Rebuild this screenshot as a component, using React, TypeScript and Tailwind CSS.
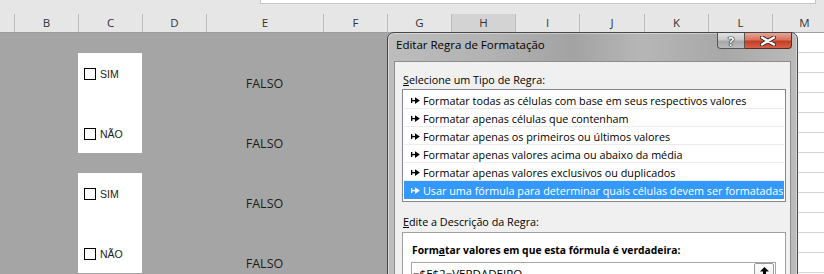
import React from 'react';

const cols = [
  { k: '', w: 'w-[14px]' },
  { k: 'B', w: 'w-[64px]' },
  { k: 'C', w: 'w-[64px]' },
  { k: 'D', w: 'w-[64px]' },
  { k: 'E', w: 'w-[117px]' },
  { k: 'F', w: 'w-[64px]' },
  { k: 'G', w: 'w-[64px]' },
  { k: 'H', w: 'w-[64px]' },
  { k: 'I', w: 'w-[64px]' },
  { k: 'J', w: 'w-[65px]' },
  { k: 'K', w: 'w-[64px]' },
  { k: 'L', w: 'w-[64px]' },
  { k: 'M', w: 'w-[64px]' },
];

const rules = [
  'Formatar todas as células com base em seus respectivos valores',
  'Formatar apenas células que contenham',
  'Formatar apenas os primeiros ou últimos valores',
  'Formatar apenas valores acima ou abaixo da média',
  'Formatar apenas valores exclusivos ou duplicados',
  'Usar uma fórmula para determinar quais células devem ser formatadas',
];

function Bullet() {
  return (
    <svg width="9" height="7" viewBox="0 0 9 7" className="shrink-0">
      <rect x="0" y="1" width="1.3" height="5" fill="currentColor" />
      <rect x="1" y="2.9" width="4" height="1.4" fill="currentColor" />
      <path d="M4 0.3 L8.8 3.6 L4 6.9 Z" fill="currentColor" />
    </svg>
  );
}

function Check({ label }: { label: string }) {
  return (
    <div className="flex items-center h-[12px]">
      <div className="w-[12px] h-[12px] border border-black bg-white shrink-0" />
      <span className="ml-[4px] text-[10.5px] leading-[12px] text-[#222] font-['Liberation_Sans',sans-serif]">{label}</span>
    </div>
  );
}

function Falso() {
  return (
    <div className="flex items-center justify-center pt-[2px] text-[12.5px] text-[#1e1e1e] font-['Open_Sans',sans-serif]">FALSO</div>
  );
}

export default function App() {
  return (
    <div className="relative w-[824px] h-[274px] overflow-hidden bg-[#e6e6e6] font-['Open_Sans',sans-serif]">
      {/* formula bar remnant */}
      <div className="h-[14px] pl-[260px]">
        <div className="h-[4px] w-[556px] bg-white border border-t-0 border-[#c6c6c6]" />
      </div>
      {/* column headers */}
      <div className="flex h-[19px] border-b border-[#9e9e9e]">
        {cols.map((c) => (
          <div
            key={c.k || 'A'}
            className={`${c.w} shrink-0 flex items-center justify-center text-[11.5px] text-[#333] ${c.k ? 'border-l border-[#bdbdbd]' : ''} ${c.k === 'H' ? 'bg-[#d3d3d3]' : ''}`}
          >
            {c.k}
          </div>
        ))}
      </div>
      {/* sheet body */}
      <div className="grid grid-cols-[14px_64px_64px_64px_117px_64px_64px_64px_64px_65px_64px_64px_64px] grid-rows-[repeat(13,20px)] bg-[#a5a5a5]">
        <div className="col-start-3 row-start-2 row-span-5 bg-white flex flex-col pl-[6px] pt-[15px] gap-[48px]">
          <Check label="SIM" />
          <Check label="NÃO" />
        </div>
        <div className="col-start-3 row-start-8 row-span-5 bg-white flex flex-col pl-[6px] pt-[15px] gap-[48px]">
          <Check label="SIM" />
          <Check label="NÃO" />
        </div>
        <div className="col-start-5 row-start-3 flex"><div className="flex-1 flex items-center justify-center"><Falso /></div></div>
        <div className="col-start-5 row-start-6 flex"><div className="flex-1 flex items-center justify-center"><Falso /></div></div>
        <div className="col-start-5 row-start-9 flex"><div className="flex-1 flex items-center justify-center"><Falso /></div></div>
        <div className="col-start-5 row-start-12 flex"><div className="flex-1 flex items-center justify-center"><Falso /></div></div>
        <div className="col-start-13 row-start-1 row-span-13 bg-white flex flex-col">
          {Array.from({ length: 13 }).map((_, i) => (
            <div key={i} className="h-[20px] shrink-0 border-b border-[#d4d4d4]" />
          ))}
        </div>
      </div>

      {/* dialog window */}
      <div className="absolute left-[387px] top-[32px] w-[411px] h-[260px] rounded-t-[7px] border border-[#474747] bg-[linear-gradient(90deg,#bdbdbd_0%,#b2b2b2_25%,#a3a3a3_45%,#b6b6b6_62%,#a8a8a8_82%,#bababa_100%)] shadow-[inset_0_0_0_1px_rgba(255,255,255,0.4)] flex flex-col">
        <div className="h-[28px] shrink-0 flex items-start">
          <div className="ml-[8px] mt-[4px] text-[11.5px] leading-[16px] text-black">Editar Regra de Formatação</div>
          <div className="ml-auto mr-[5px] flex">
            <div className="w-[28px] h-[16px] rounded-bl-[4px] border border-t-0 border-[#555] bg-[linear-gradient(#e2e2e2,#c8c8c8_45%,#a8a8a8_55%,#bcbcbc)] flex items-center justify-center">
              <span className="text-[13px] leading-[14px] font-bold text-white [text-shadow:0_0_1px_#000,0_0_1px_#000,0_0_1px_#000]">?</span>
            </div>
            <div className="w-[47px] h-[16px] rounded-br-[4px] border border-t-0 border-l-0 border-[#5b2a22] bg-[linear-gradient(#e9a695,#d7735e_45%,#c43e24_55%,#d5604a)] flex items-center justify-center">
              <svg width="16" height="10" viewBox="0 0 16 10">
                <path d="M2 1.5 L14 8.5 M14 1.5 L2 8.5" stroke="#3a2a28" strokeWidth="4.2" strokeLinecap="round" />
                <path d="M2 1.5 L14 8.5 M14 1.5 L2 8.5" stroke="#fff" strokeWidth="2.4" strokeLinecap="round" />
              </svg>
            </div>
          </div>
        </div>
        <div className="mx-[6px] flex-1 border border-[#8d8d8d] bg-[#f0f0f0] pt-[10px] text-[10.8px] text-black">
          <div className="pl-[8px] leading-[16px]"><u>S</u>elecione um Tipo de Regra:</div>
          <div className="ml-[7px] mt-[1px] w-[384px] border border-[#828790] bg-white pt-[1px] pb-[2px] px-[1px]">
            {rules.map((r, i) => (
              <div
                key={r}
                className={`h-[18px] flex items-center pl-[7px] pt-[2px] border-b ${i === 5 ? 'bg-[#3399ff] text-white border-[#3399ff]' : 'border-[#ececec] text-black'}`}
              >
                <Bullet />
                <span className="ml-[3px] whitespace-nowrap leading-[16px]">{r}</span>
              </div>
            ))}
          </div>
          <div className="pl-[8px] mt-[12px] leading-[16px]"><u>E</u>dite a Descrição da Regra:</div>
          <div className="ml-[7px] mt-[2px] w-[384px] h-[60px] border border-[#a0a0a0] bg-white pl-[8px] pt-[9px]">
            <div className="ml-[1px] font-bold text-[10.3px] leading-[16px]">Form<u>a</u>tar valores em que esta fórmula é verdadeira:</div>
            <div className="mt-[4px] w-[365px] h-[22px] border border-[#a6a6a6] flex items-start">
              <span className="pl-[1px] pt-[3px] leading-[16px] text-[11.5px]">=$E$2=VERDADEIRO</span>
              <div className="ml-auto mr-[1px] w-[20px] h-[19px] rounded-[2px] border border-[#9a9a9a] bg-[linear-gradient(#fdfdfd,#ececec)] flex justify-center pt-[3px]">
                <svg width="9" height="9" viewBox="0 0 9 9">
                  <path d="M4.5 0 L9 4.5 H6 V9 H3 V4.5 H0 Z" fill="#000" />
                </svg>
              </div>
            </div>
          </div>
        </div>
      </div>
    </div>
  );
}
